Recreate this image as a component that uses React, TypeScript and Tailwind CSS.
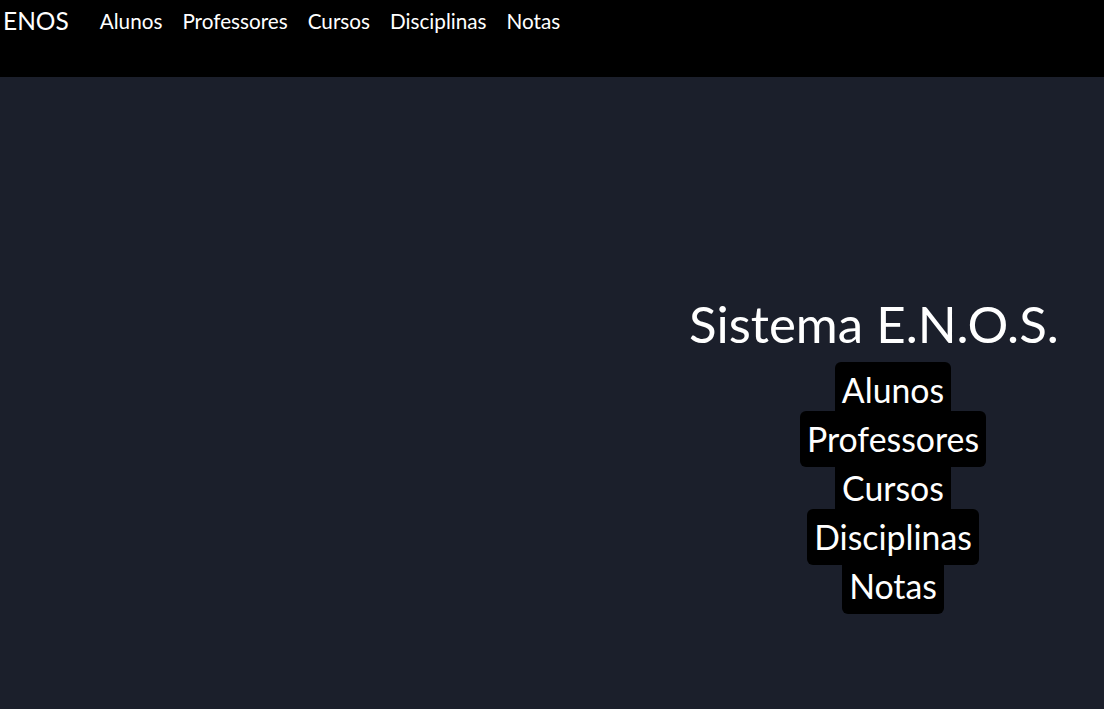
const links = ["Alunos", "Professores", "Cursos", "Disciplinas", "Notas"];

export default function App() {
  return (
    <div className="min-h-screen bg-[#1b1f2b] text-white font-['Lato',sans-serif]">
      <nav className="flex h-[77px] items-start bg-black">
        <a className="pl-[3px] pr-[31px] pt-[5px] text-[24.5px] leading-[32px]">ENOS</a>
        <ul className="flex gap-[20px] pt-[8px]">
          {links.map((l) => (
            <li key={l} className="text-[20.7px] leading-[26px]">
              {l}
            </li>
          ))}
        </ul>
      </nav>

      <main className="flex pt-[213px] pl-[689px]">
        <div className="flex w-[368px] flex-col">
          <h1 className="whitespace-nowrap text-center text-[51px] font-normal leading-[68px]">
            Sistema E.N.O.S.
          </h1>
          <ul className="flex flex-col items-center pl-10 pt-[7.5px]">
            {links.map((l, i) => (
              <li key={l} className="flex h-[49px] items-center justify-center">
                <a
                  className={
                    "flex h-[56px] items-center rounded-md bg-black px-[7px] text-[33.8px] " +
                    (i % 2 === 1 ? "relative z-10" : "")
                  }
                >
                  {l}
                </a>
              </li>
            ))}
          </ul>
        </div>
      </main>
    </div>
  );
}
